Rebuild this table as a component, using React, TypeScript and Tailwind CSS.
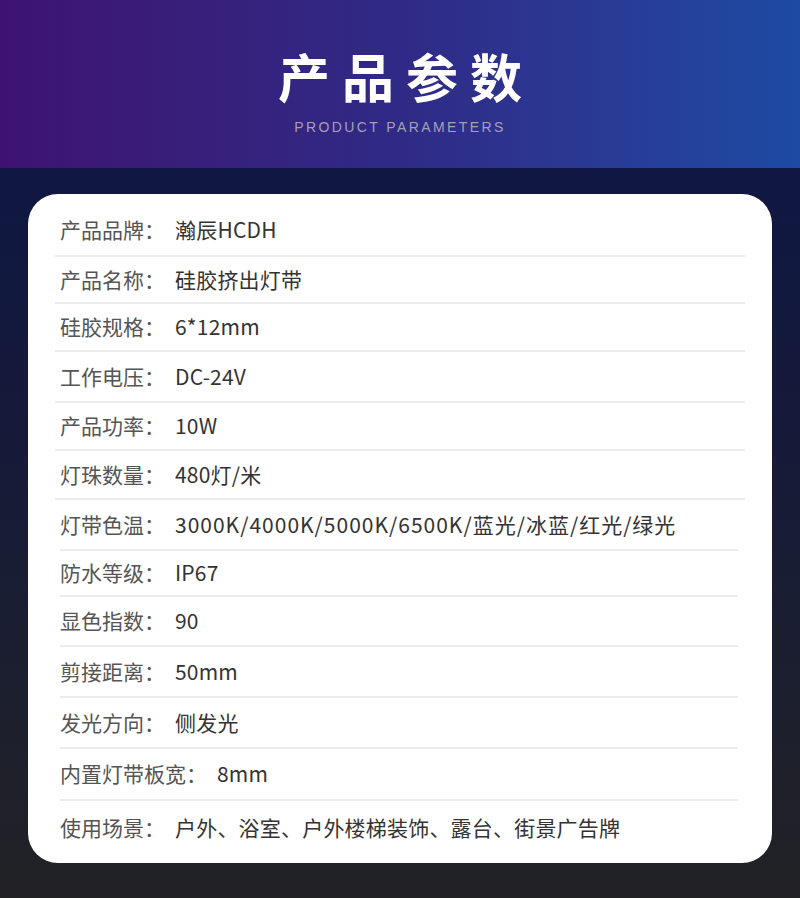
const rows: { label: string; value: string; h: string; line: string; wide?: boolean }[] = [
  { label: "产品品牌：", value: "瀚辰HCDH", h: "h-[61px]", line: "mx-[27px]" },
  { label: "产品名称：", value: "硅胶挤出灯带", h: "h-[45px]", line: "mx-[27px]" },
  { label: "硅胶规格：", value: "6*12mm", h: "h-[46px]", line: "mx-[27px]" },
  { label: "工作电压：", value: "DC-24V", h: "h-[49px]", line: "mx-[27px]" },
  { label: "产品功率：", value: "10W", h: "h-[46px]", line: "mx-[27px]" },
  { label: "灯珠数量：", value: "480灯/米", h: "h-[47px]", line: "mx-[27px]" },
  { label: "灯带色温：", value: "3000K/4000K/5000K/6500K/蓝光/冰蓝/红光/绿光", h: "h-[49px]", line: "ml-[32px] mr-[34px]", wide: true },
  { label: "防水等级：", value: "IP67", h: "h-[44px]", line: "ml-[32px] mr-[34px]" },
  { label: "显色指数：", value: "90", h: "h-[48px]", line: "ml-[32px] mr-[34px]" },
  { label: "剪接距离：", value: "50mm", h: "h-[49px]", line: "ml-[32px] mr-[34px]" },
  { label: "发光方向：", value: "侧发光", h: "h-[49px]", line: "ml-[32px] mr-[34px]" },
  { label: "内置灯带板宽：", value: "8mm", h: "h-[50px]", line: "ml-[32px] mr-[34px]" },
  { label: "使用场景：", value: "户外、浴室、户外楼梯装饰、露台、街景广告牌", h: "h-[62px]", line: "" },
]

export default function App() {
  return (
    <div className="w-[800px] h-[898px] overflow-hidden bg-gradient-to-b from-[#0b1549] via-[#161a38] to-[#222225] font-['Noto_Sans_CJK_SC',sans-serif]">
      <header className="h-[168px] bg-gradient-to-r from-[#3d1370] via-[#2f2a86] to-[#1c4aa3] flex flex-col items-center">
        <h1 className="mt-[44px] text-[52px] leading-[64px] font-bold text-white tracking-[12px] pl-[12px]">产品参数</h1>
        <p className="mt-[10px] text-[14px] leading-[18px] text-[#a3a0b8] tracking-[2.4px] font-['Liberation_Sans',sans-serif]">
          PRODUCT PARAMETERS
        </p>
      </header>

      <div className="mx-[28px] mt-[26px] h-[669px] bg-white rounded-[30px]">
        {rows.map((r, i) => (
          <div key={i}>
            <div className={`${r.h} flex items-center pl-[32px] ${i === 0 ? "pt-[10px]" : ""} ${i === rows.length - 1 ? "pb-[8px]" : ""}`}>
              <span className="text-[21px] text-[#555555]">{r.label}</span>
              <span className={`ml-[10px] text-[21px] text-[#333333] ${r.wide ? "tracking-[1px]" : "tracking-[0.2px]"}`}>{r.value}</span>
            </div>
            {i < rows.length - 1 && <div className={`h-[2px] bg-[#ececec] ${r.line}`} />}
          </div>
        ))}
      </div>
    </div>
  )
}
